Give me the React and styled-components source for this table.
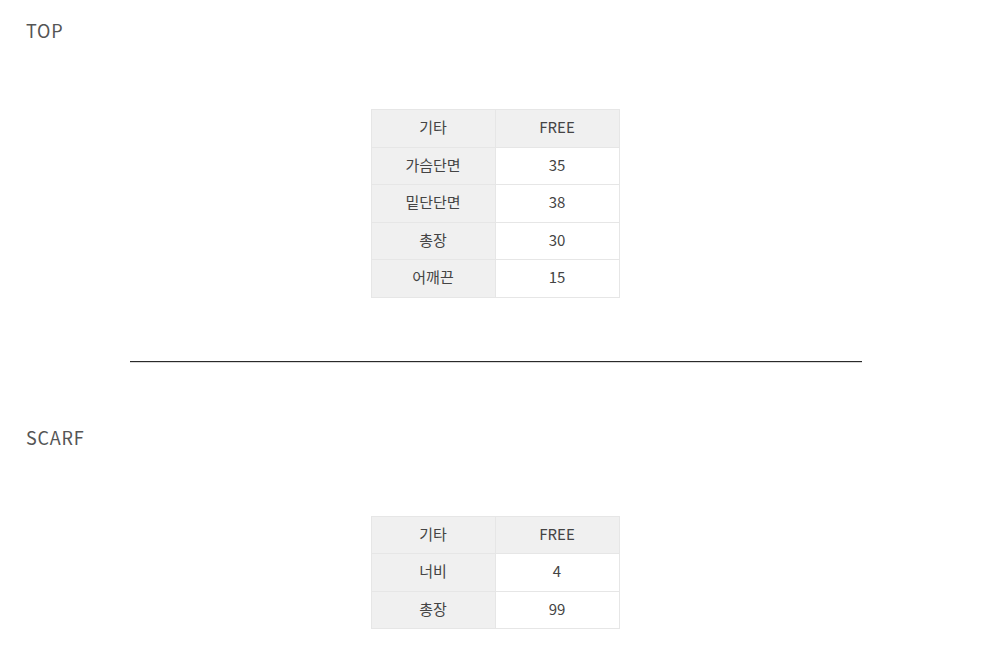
import React from "react";
import styled, { createGlobalStyle } from "styled-components";

const Global = createGlobalStyle`
  html, body { margin: 0; padding: 0; background: #fff; }
  body { font-family: "Noto Sans CJK KR", "Noto Sans", sans-serif; }
`;

const Page = styled.div`
  padding-top: 19px;
`;

const Section = styled.section`
  display: flex;
  flex-direction: column;
`;

const Title = styled.h2`
  margin: 0;
  padding-left: 26px;
  font-size: 18px;
  font-weight: 400;
  line-height: 22px;
  color: #555;
  letter-spacing: 0.8px;
`;

const Table = styled.table`
  margin: 68px auto 0;
  border-collapse: collapse;
  width: 249px;
  font-size: 15px;
  color: #444;
  transform: translateX(-5px);
`;

const Row = styled.tr`
  height: 37.5px;
`;

const Cell = styled.td`
  padding: 0 0 3px;
  text-align: center;
  border: 1px solid #e6e6e6;
  background: ${(p) => (p.$head ? "#f0f0f0" : "#fff")};
  width: ${(p) => (p.$label ? "123px" : "auto")};
  line-height: 1;
`;

const Divider = styled.hr`
  margin: 63px auto 64px;
  width: 732px;
  height: 1px;
  border: 0;
  background: #2a2a2a;
  box-shadow: 0 1px 0 #d8d8d8;
  transform: translateX(-4px);
`;

const SizeTable = ({ rows }) => (
  <Table>
    <tbody>
      {rows.map(([k, v], i) => (
        <Row key={k}>
          <Cell $head $label>{k}</Cell>
          <Cell $head={i === 0}>{v}</Cell>
        </Row>
      ))}
    </tbody>
  </Table>
);

export default function App() {
  return (
    <Page>
      <Global />
      <Section>
        <Title>TOP</Title>
        <SizeTable
          rows={[
            ["기타", "FREE"],
            ["가슴단면", "35"],
            ["밑단단면", "38"],
            ["총장", "30"],
            ["어깨끈", "15"],
          ]}
        />
      </Section>
      <Divider />
      <Section>
        <Title>SCARF</Title>
        <SizeTable
          rows={[
            ["기타", "FREE"],
            ["너비", "4"],
            ["총장", "99"],
          ]}
        />
      </Section>
    </Page>
  );
}
